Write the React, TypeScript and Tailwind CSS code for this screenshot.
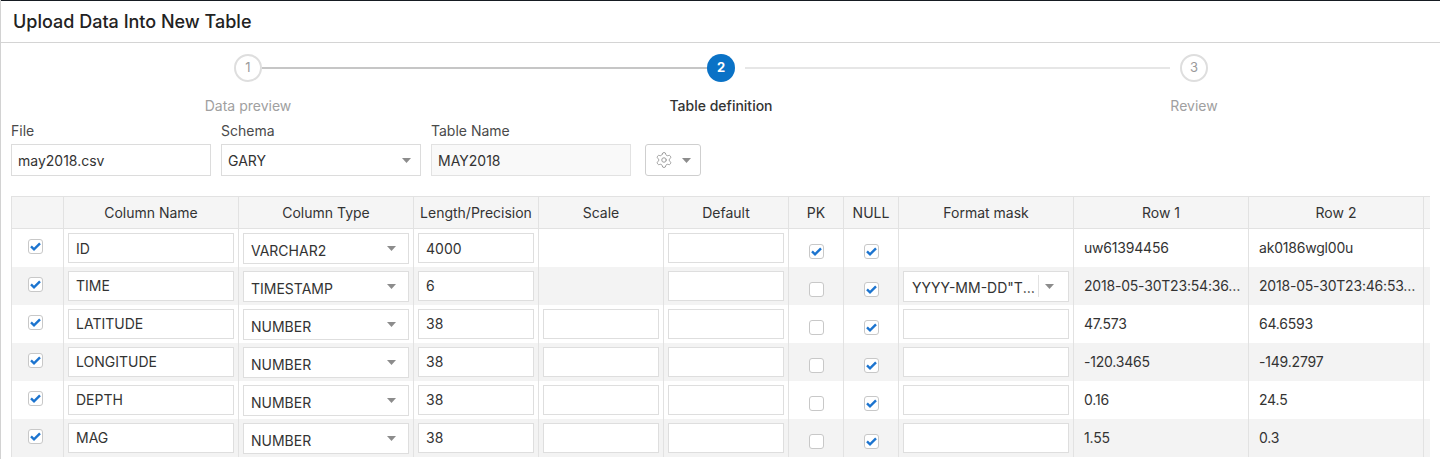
import { Settings } from 'lucide-react'

const font = { fontFamily: 'Inter, "Noto Sans", sans-serif' }

type Row = {
  name: string
  type: string
  length: string
  scale: boolean
  pk: boolean
  mask: 'none' | 'select' | 'input'
  r1: string
  r2: string
}

const rows: Row[] = [
  { name: 'ID', type: 'VARCHAR2', length: '4000', scale: false, pk: true, mask: 'none', r1: 'uw61394456', r2: 'ak0186wgl00u' },
  { name: 'TIME', type: 'TIMESTAMP', length: '6', scale: false, pk: false, mask: 'select', r1: '2018-05-30T23:54:36.050Z', r2: '2018-05-30T23:46:53.000Z' },
  { name: 'LATITUDE', type: 'NUMBER', length: '38', scale: true, pk: false, mask: 'input', r1: '47.573', r2: '64.6593' },
  { name: 'LONGITUDE', type: 'NUMBER', length: '38', scale: true, pk: false, mask: 'input', r1: '-120.3465', r2: '-149.2797' },
  { name: 'DEPTH', type: 'NUMBER', length: '38', scale: true, pk: false, mask: 'input', r1: '0.16', r2: '24.5' },
  { name: 'MAG', type: 'NUMBER', length: '38', scale: true, pk: false, mask: 'input', r1: '1.55', r2: '0.3' },
]

const Caret = () => (
  <svg width="9" height="5" viewBox="0 0 9 5" className="shrink-0">
    <polygon points="0,0 9,0 4.5,5" fill="#8c8c8c" />
  </svg>
)

const Check = ({ on }: { on: boolean }) => (
  <span className="w-[15px] h-[15px] border border-[#c8c8c8] rounded-[3px] bg-white flex items-center justify-center">
    {on && (
      <svg width="11" height="9" viewBox="0 0 11 9">
        <path d="M1 4.4 L4 7.3 L10 1.3" fill="none" stroke="#1c74cf" strokeWidth="2.4" />
      </svg>
    )}
  </span>
)

const TextBox = ({ value = '' }: { value?: string }) => (
  <div className="h-[30px] border border-[#dedede] bg-white px-[7px] flex items-center text-[14px] text-[#333]">
    <span className="truncate">{value}</span>
  </div>
)

const SelectBox = ({ value }: { value: string }) => (
  <div className="h-[31px] border border-[#dedede] bg-white pl-[7px] pr-[12px] flex items-center justify-between text-[14px] text-[#333]">
    <span className="pt-[4px]">{value}</span>
    <Caret />
  </div>
)

const Step = ({ n, state }: { n: number; state: 'done' | 'active' | 'todo' }) =>
  state === 'active' ? (
    <div className="w-[28px] h-[28px] rounded-full bg-[#0a72c6] text-white text-[13px] font-bold flex items-center justify-center shrink-0">
      {n}
    </div>
  ) : (
    <div className="w-[28px] h-[28px] rounded-full border-2 border-[#dedede] text-[#9a9a9a] text-[13px] flex items-center justify-center shrink-0">
      {n}
    </div>
  )

const headers = ['', 'Column Name', 'Column Type', 'Length/Precision', 'Scale', 'Default', 'PK', 'NULL', 'Format mask', 'Row 1', 'Row 2', '']
const widths = [52, 175, 175, 125, 125, 125, 55, 55, 175, 175, 175, 175]

export default function App() {
  return (
    <div className="w-[1440px] h-[459px] overflow-hidden bg-white border-l border-[#d2d2d2]" style={font}>
      <div className="h-[43px] border-t border-b border-t-[#161b22] border-b-[#d4d4d4] flex items-center pl-[12px]">
        <h1 className="text-[18px] font-medium text-[#222]">Upload Data Into New Table</h1>
      </div>

      <div className="pt-[11px]">
        <div className="flex items-center ml-[233px]">
          <Step n={1} state="done" />
          <div className="w-[445px] h-[2px] bg-[#c6c6c6]" />
          <Step n={2} state="active" />
          <div className="w-[425px] h-[2px] bg-[#e6e6e6] ml-[10px]" />
          <div className="ml-[10px]">
            <Step n={3} state="todo" />
          </div>
        </div>
        <div className="flex mt-[14px] text-[14px] leading-[20px]">
          <div className="ml-[147px] w-[200px] text-center text-[#a0a0a0]">Data preview</div>
          <div className="ml-[273px] w-[200px] text-center text-[#333] font-medium">Table definition</div>
          <div className="ml-[273px] w-[200px] text-center text-[#a0a0a0]">Review</div>
        </div>
      </div>

      <div className="px-[10px]">
        <div className="flex items-end gap-[10px] mt-[5px] text-[14px]">
          <div className="w-[200px]">
            <div className="text-[#4a4a4a] leading-[20px] mb-[3px]">File</div>
            <div className="h-[32px] border border-[#dcdcdc] bg-white px-[6px] flex items-center text-[#333]">may2018.csv</div>
          </div>
          <div className="w-[200px]">
            <div className="text-[#4a4a4a] leading-[20px] mb-[3px]">Schema</div>
            <div className="h-[32px] border border-[#dcdcdc] bg-white pl-[6px] pr-[9px] flex items-center justify-between text-[#333]">
              <span>GARY</span>
              <Caret />
            </div>
          </div>
          <div className="w-[200px]">
            <div className="text-[#4a4a4a] leading-[20px] mb-[3px]">Table Name</div>
            <div className="h-[32px] border border-[#e2e2e2] bg-[#f9f9f9] px-[6px] flex items-center text-[#333]">MAY2018</div>
          </div>
          <button className="ml-[4px] w-[56px] h-[32px] border border-[#cfcfcf] rounded-[3px] bg-white flex items-center justify-center gap-[9px]">
            <Settings size={18} strokeWidth={1.3} color="#9a9a9a" />
            <Caret />
          </button>
        </div>

        <div className="mt-[20px] w-[1419px] overflow-hidden">
          <table className="table-fixed border-collapse text-[14px] text-[#333]" style={{ width: 1587 }}>
            <colgroup>
              {widths.map((w, i) => (
                <col key={i} style={{ width: w }} />
              ))}
            </colgroup>
            <thead>
              <tr className="h-[32px] bg-[#f5f5f5]">
                {headers.map((h, i) => (
                  <th key={i} className="border border-[#e2e2e2] font-normal text-center text-[#333] px-1">
                    {h}
                  </th>
                ))}
              </tr>
            </thead>
            <tbody>
              {rows.map((r, i) => (
                <tr key={r.name} className={`h-[38px] ${i % 2 === 1 ? 'bg-[#f3f3f3]' : 'bg-white'}`}>
                  <td className="border-x border-[#e2e2e2] align-top">
                    <div className="pt-[10px] pl-[16px]">
                      <Check on />
                    </div>
                  </td>
                  <td className="border-x border-[#e2e2e2] px-[4px] align-top pt-[4px]">
                    <TextBox value={r.name} />
                  </td>
                  <td className="border-x border-[#e2e2e2] px-[4px] align-top pt-[4px]">
                    <SelectBox value={r.type} />
                  </td>
                  <td className="border-x border-[#e2e2e2] px-[4px] align-top pt-[4px]">
                    <TextBox value={r.length} />
                  </td>
                  <td className="border-x border-[#e2e2e2] px-[4px] align-top pt-[4px]">
                    {r.scale && <TextBox />}
                  </td>
                  <td className="border-x border-[#e2e2e2] px-[4px] align-top pt-[4px]">
                    <TextBox />
                  </td>
                  <td className="border-x border-[#e2e2e2] align-top">
                    <div className="pt-[15px] flex justify-center">
                      <Check on={r.pk} />
                    </div>
                  </td>
                  <td className="border-x border-[#e2e2e2] align-top">
                    <div className="pt-[15px] flex justify-center">
                      <Check on />
                    </div>
                  </td>
                  <td className="border-x border-[#e2e2e2] px-[4px] align-top pt-[4px]">
                    {r.mask === 'input' && <TextBox />}
                    {r.mask === 'select' && (
                      <div className="h-[31px] border border-[#dedede] bg-white flex items-center text-[14px] text-[#333]">
                        <span className="pl-[8px] pt-[3px] w-[133px] truncate">YYYY-MM-DD"T"HH24:MI:SS.FF3"Z"</span>
                        <span className="h-[22px] w-px bg-[#e2e2e2] ml-[1px]" />
                        <span className="ml-[6px]">
                          <Caret />
                        </span>
                      </div>
                    )}
                  </td>
                  <td className="border-x border-[#e2e2e2] pl-[10px] pr-[6px]">
                    <div className="truncate tracking-[-0.2px]">{r.r1}</div>
                  </td>
                  <td className="border-x border-[#e2e2e2] pl-[10px] pr-[6px]">
                    <div className="truncate tracking-[-0.2px]">{r.r2}</div>
                  </td>
                  <td className="border-x border-[#e2e2e2] px-[10px]" />
                </tr>
              ))}
            </tbody>
          </table>
        </div>
      </div>
    </div>
  )
}
